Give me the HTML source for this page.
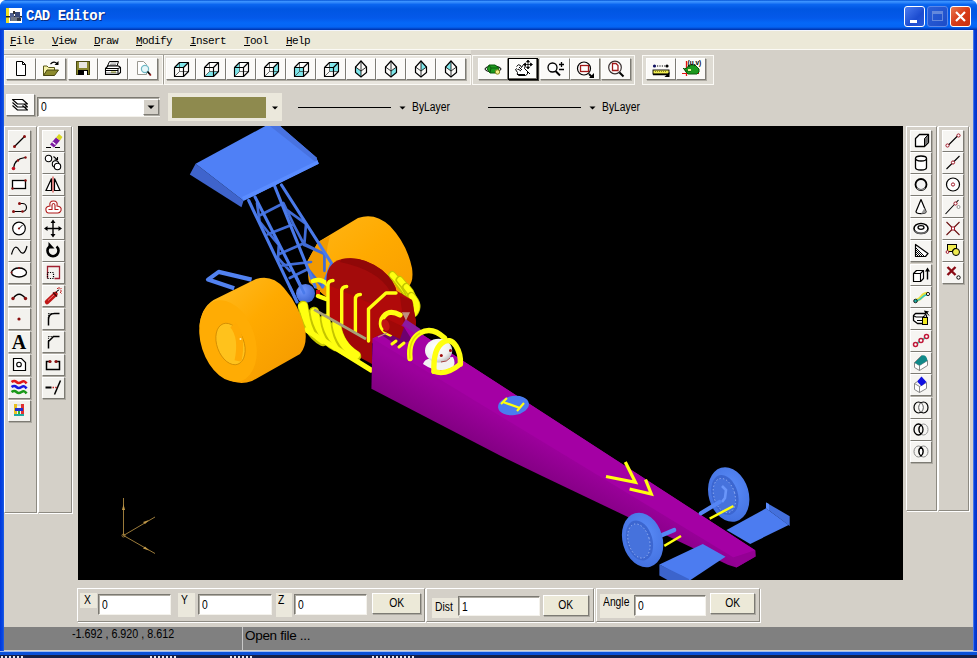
<!DOCTYPE html>
<html><head><meta charset="utf-8"><title>CAD Editor</title>
<style>
*{box-sizing:border-box;margin:0;padding:0}
html,body{width:977px;height:658px;overflow:hidden;background:#d4d0c8;font-family:"Liberation Sans",sans-serif;font-size:12px;color:#000}
#win{position:absolute;left:0;top:0;width:977px;height:658px;background:#d4d0c8;overflow:hidden}
.abs{position:absolute}
#title{left:0;top:0;width:977px;height:30px;background:linear-gradient(#0352d4 0,#3a92ff 1.5px,#2f86fa 2.5px,#0a66f0 4.5px,#0056e2 9px,#0459ea 18px,#0568f8 23px,#0564f4 27px,#0038b4 29.5px,#0038b4 30px)}
#title .t{left:26px;top:8px;color:#fff;font:bold 14px/16px "Liberation Mono",monospace;letter-spacing:-0.48px;text-shadow:1px 1px 0 #0a2a80}
#bl{left:0;top:30px;width:4px;height:628px;background:linear-gradient(90deg,#0036dc,#0a4ce2 3px,#2a62e6)}
#br{left:973px;top:30px;width:4px;height:628px;background:linear-gradient(90deg,#7ea4f0,#0a44dc 1px,#0030c8)}
#bb{left:0;top:651px;width:977px;height:4px;background:#0a50d8;border-top:1px solid #9cb8f0}
#menu{left:4px;top:30px;width:969px;height:19px;background:#ece9d8;border-top:1px solid #f4f6fc}
#menu span{position:absolute;top:4px;font:11px "Liberation Mono",monospace;letter-spacing:-0.6px}
.pr{border-color:#000 !important;box-shadow:inset -1px -1px 0 #6d6b64,inset 1px 1px 0 #fff,1px 1px 0 #403e38 !important;background:#fdfdfb !important}
.wb{width:21px;height:21px;border:1px solid #fff;border-radius:3px}
.btn{position:absolute;background:#fbfaf8;border:1px solid;border-color:#fff #7d7b74 #7d7b74 #fff;box-shadow:1px 1px 0 #aeaba3}
.tb{position:absolute;border:1px solid;border-color:#fff #9d9a92 #9d9a92 #fff}
.inp{position:absolute;background:#fff;border:1px solid;border-color:#7b7972 #f4f2ec #f4f2ec #7b7972;box-shadow:inset 1px 1px 0 #b0ada5}
.lbl{position:absolute;font-size:12px;transform:scaleX(.86);transform-origin:0 50%;white-space:nowrap}
.n{display:inline-block;transform:scaleX(.86);transform-origin:0 50%;white-space:nowrap}
.nc{display:inline-block;transform:scaleX(.86);transform-origin:50% 50%}
.ef{position:absolute;border:1px solid;border-color:#fff #8d8a82 #8d8a82 #fff;box-shadow:1px 1px 0 #fff}
#status{left:4px;top:627px;width:969px;height:23px;background:#808080}
</style></head><body><div id="win">
<div id="title" class="abs"><svg class="abs" style="left:6px;top:8px" width="16" height="15"><rect width="16" height="15" fill="#fff"/><rect width="3" height="15" fill="#f0e020"/><rect x="0" y="8" width="16" height="1.500" fill="#202020"/><rect x="4" y="5" width="4" height="8" fill="#506090"/><rect x="9" y="4" width="5" height="8" fill="#384878"/><rect x="5" y="9" width="8" height="4" fill="#707888"/><rect x="7" y="3" width="2" height="3" fill="#303030"/><rect x="11" y="10" width="4" height="3" fill="#303848"/></svg><span class="t abs">CAD Editor</span></div>
<div class="abs wb" style="left:904px;top:6px;background:linear-gradient(135deg,#4c7cf0,#1c4cd0 60%,#2a5ad8)"><div class="abs" style="left:5px;top:13px;width:7px;height:3px;background:#fff"></div></div>
<div class="abs wb" style="left:927px;top:6px;background:linear-gradient(135deg,#2c60d8,#1c4cc8);border-color:#5c88e8"><div class="abs" style="left:4px;top:4px;width:11px;height:10px;border:1px solid #6488dc;border-top-width:3px"></div></div>
<div class="abs wb" style="left:950px;top:6px;background:linear-gradient(135deg,#e87850,#d83c18 50%,#c83010)"><svg class="abs" style="left:0;top:0" width="19" height="19"><path d="M5 5l9 9M14 5l-9 9" stroke="#fff" stroke-width="2.200"/></svg></div>
<svg class="abs" id="cornerL" style="left:0;top:0" width="6" height="6"><path d="M0 0h5q-4 1-5 5z" fill="#fff"/></svg><svg class="abs" style="left:971px;top:0" width="6" height="6"><path d="M6 0h-5q4 1 5 5z" fill="#fff"/></svg>
<div id="bl" class="abs"></div><div id="br" class="abs"></div><div id="bb" class="abs"></div>
<div id="menu" class="abs">
<span style="left:6px"><u>F</u>ile</span><span style="left:48px"><u>V</u>iew</span><span style="left:90px"><u>D</u>raw</span><span style="left:132px"><u>M</u>odify</span><span style="left:186px"><u>I</u>nsert</span><span style="left:240px"><u>T</u>ool</span><span style="left:282px"><u>H</u>elp</span>
</div>
<div class="abs" style="left:4px;top:49px;width:969px;height:1px;background:#fbfaf5"></div>
<div class="abs" style="left:4px;top:50px;width:467px;height:4px;background:#e2dfd6"></div>
<div class="abs" style="left:4px;top:54px;width:467px;height:1px;background:#a9a69d"></div>
<div class="abs" style="left:4px;top:55px;width:159px;height:30px;background:#e8e5de;border:1px solid #fbfaf6"></div>
<div class="abs" style="left:164px;top:55px;width:307px;height:30px;background:#e8e5de;border:1px solid #fbfaf6"></div>
<div class="abs" style="left:472px;top:55px;width:163px;height:30px;background:#dad7cf;border:1px solid #fbfaf6"></div>
<div class="abs" style="left:642px;top:55px;width:72px;height:30px;background:#dedbd3;border:1px solid #fbfaf6"></div>
<div class="abs" style="left:163px;top:55px;width:1px;height:29px;background:#9d9a92"></div>
<div class="btn" style="left:6px;top:58px;width:30px;height:22px"><svg width="30" height="22" viewBox="0 0 30 22" style="position:absolute;left:-1px;top:-1px"><path d="M10.5 3.5h6l3 3v11h-9z" fill="#fff" stroke="#000"/><path d="M16.5 3.5v3h3" fill="none" stroke="#000"/></svg></div>
<div class="btn" style="left:36px;top:58px;width:30px;height:22px"><svg width="30" height="22" viewBox="0 0 30 22" style="position:absolute;left:-1px;top:-1px"><path d="M7.500 17.500v-9.500h3.500l1.500 1.500h6v3" fill="#f6f2a8" stroke="#5a5918"/><path d="M7.500 17.500l3.500-5.500h11.500l-4 5.500z" fill="#8c8a2c" stroke="#45440e"/><path d="M14.500 6q3.500-3.500 6.500-.5" fill="none" stroke="#000" stroke-width="1.100"/><path d="M22.500 3v4h-4z" fill="#000"/></svg></div>
<div class="btn" style="left:68px;top:58px;width:30px;height:22px"><svg width="30" height="22" viewBox="0 0 30 22" style="position:absolute;left:-1px;top:-1px"><rect x="8.500" y="3.500" width="13" height="13" fill="#8a8830" stroke="#4a4910"/><rect x="11" y="4" width="8" height="6" fill="#e8e6e0"/><rect x="10" y="12" width="10" height="5" fill="#000"/><rect x="16" y="13" width="3" height="4" fill="#fff"/></svg></div>
<div class="btn" style="left:98px;top:58px;width:30px;height:22px"><svg width="30" height="22" viewBox="0 0 30 22" style="position:absolute;left:-1px;top:-1px"><path d="M11.500 3.500h9l-1.500 4.500h-9.500z" fill="#fff" stroke="#000" stroke-width="1"/><path d="M12.500 5h6M12 6.500h6" stroke="#777" fill="none" stroke-width=".7"/><path d="M7.500 10.500l2.500-2.500h10.500l2 1.500v5l-2.500 2h-12.500z" fill="#fff" stroke="#000" stroke-width="1.100" stroke-linejoin="round"/><path d="M7.500 10.500h12.500l2.500-1M20 10.500v6" fill="none" stroke="#000" stroke-width="1"/><path d="M8 12.500h12" stroke="#000" stroke-width="1"/><rect x="13" y="13.500" width="5" height="1.200" fill="#9aa020"/><path d="M8 15h12" stroke="#555" stroke-width=".8"/></svg></div>
<div class="btn" style="left:128px;top:58px;width:30px;height:22px"><svg width="30" height="22" viewBox="0 0 30 22" style="position:absolute;left:-1px;top:-1px"><path d="M9.500 3.500h6l3 3v10h-9z" fill="#fff" stroke="#9a9890"/><circle cx="17" cy="11" r="3.600" fill="#e6f7fa" stroke="#6fb8c4" stroke-width="1.200"/><path d="M19.500 13.500l3 3.500" stroke="#000" stroke-width="1.800"/><path d="M21.500 16l1.500 1.500" stroke="#a02020" stroke-width="1.500"/></svg></div>
<div class="btn" style="left:166px;top:58px;width:30px;height:22px"><svg width="30" height="22" viewBox="0 0 30 22" style="position:absolute;left:-1px;top:-1px"><polygon points="8.5,9.5 17.5,9.5 22.5,4.5 13.5,4.5" fill="#7fe6ea"/><path d="M13.5,13.5L13.5,4.5M13.5,13.5L22.5,13.5M13.5,13.5L8.5,18.5" stroke="#333" stroke-width=".7" fill="none"/><path d="M8.5,9.5L17.5,9.5L17.5,18.5L8.5,18.5ZM8.5,9.5L13.5,4.5L22.5,4.5L17.5,9.5M22.5,4.5L22.5,13.5L17.5,18.5" stroke="#000" stroke-width="1.150" fill="none" stroke-linejoin="round"/></svg></div>
<div class="btn" style="left:196px;top:58px;width:30px;height:22px"><svg width="30" height="22" viewBox="0 0 30 22" style="position:absolute;left:-1px;top:-1px"><polygon points="8.5,18.5 17.5,18.5 22.5,13.5 13.5,13.5" fill="#7fe6ea"/><path d="M13.5,13.5L13.5,4.5M13.5,13.5L22.5,13.5M13.5,13.5L8.5,18.5" stroke="#333" stroke-width=".7" fill="none"/><path d="M8.5,9.5L17.5,9.5L17.5,18.5L8.5,18.5ZM8.5,9.5L13.5,4.5L22.5,4.5L17.5,9.5M22.5,4.5L22.5,13.5L17.5,18.5" stroke="#000" stroke-width="1.150" fill="none" stroke-linejoin="round"/></svg></div>
<div class="btn" style="left:226px;top:58px;width:30px;height:22px"><svg width="30" height="22" viewBox="0 0 30 22" style="position:absolute;left:-1px;top:-1px"><polygon points="8.5,9.5 8.5,18.5 13.5,13.5 13.5,4.5" fill="#7fe6ea"/><path d="M13.5,13.5L13.5,4.5M13.5,13.5L22.5,13.5M13.5,13.5L8.5,18.5" stroke="#333" stroke-width=".7" fill="none"/><path d="M8.5,9.5L17.5,9.5L17.5,18.5L8.5,18.5ZM8.5,9.5L13.5,4.5L22.5,4.5L17.5,9.5M22.5,4.5L22.5,13.5L17.5,18.5" stroke="#000" stroke-width="1.150" fill="none" stroke-linejoin="round"/></svg></div>
<div class="btn" style="left:256px;top:58px;width:30px;height:22px"><svg width="30" height="22" viewBox="0 0 30 22" style="position:absolute;left:-1px;top:-1px"><polygon points="17.5,9.5 17.5,18.5 22.5,13.5 22.5,4.5" fill="#7fe6ea"/><path d="M13.5,13.5L13.5,4.5M13.5,13.5L22.5,13.5M13.5,13.5L8.5,18.5" stroke="#333" stroke-width=".7" fill="none"/><path d="M8.5,9.5L17.5,9.5L17.5,18.5L8.5,18.5ZM8.5,9.5L13.5,4.5L22.5,4.5L17.5,9.5M22.5,4.5L22.5,13.5L17.5,18.5" stroke="#000" stroke-width="1.150" fill="none" stroke-linejoin="round"/></svg></div>
<div class="btn" style="left:286px;top:58px;width:30px;height:22px"><svg width="30" height="22" viewBox="0 0 30 22" style="position:absolute;left:-1px;top:-1px"><polygon points="8.5,9.5 17.5,9.5 17.5,18.5 8.5,18.5" fill="#7fe6ea"/><path d="M13.5,13.5L13.5,4.5M13.5,13.5L22.5,13.5M13.5,13.5L8.5,18.5" stroke="#333" stroke-width=".7" fill="none"/><path d="M8.5,9.5L17.5,9.5L17.5,18.5L8.5,18.5ZM8.5,9.5L13.5,4.5L22.5,4.5L17.5,9.5M22.5,4.5L22.5,13.5L17.5,18.5" stroke="#000" stroke-width="1.150" fill="none" stroke-linejoin="round"/></svg></div>
<div class="btn" style="left:316px;top:58px;width:30px;height:22px"><svg width="30" height="22" viewBox="0 0 30 22" style="position:absolute;left:-1px;top:-1px"><polygon points="13.5,4.5 22.5,4.5 22.5,13.5 13.5,13.5" fill="#7fe6ea"/><path d="M13.5,13.5L13.5,4.5M13.5,13.5L22.5,13.5M13.5,13.5L8.5,18.5" stroke="#333" stroke-width=".7" fill="none"/><path d="M8.5,9.5L17.5,9.5L17.5,18.5L8.5,18.5ZM8.5,9.5L13.5,4.5L22.5,4.5L17.5,9.5M22.5,4.5L22.5,13.5L17.5,18.5" stroke="#000" stroke-width="1.150" fill="none" stroke-linejoin="round"/></svg></div>
<div class="btn" style="left:346px;top:58px;width:30px;height:22px"><svg width="30" height="22" viewBox="0 0 30 22" style="position:absolute;left:-1px;top:-1px"><polygon points="9.5,9 15,13 15,19 9.5,14.5" fill="#7fe6ea"/><path d="M15,3L20.5,9L20.5,14.5L15,19L9.5,14.5L9.5,9Z" fill="none" stroke="#000" stroke-width="1.200"/><path d="M9.5,9L15,13L20.5,9M15,13L15,19M15,3L15,13" fill="none" stroke="#000" stroke-width=".8"/></svg></div>
<div class="btn" style="left:376px;top:58px;width:30px;height:22px"><svg width="30" height="22" viewBox="0 0 30 22" style="position:absolute;left:-1px;top:-1px"><polygon points="20.5,9 15,13 15,19 20.5,14.5" fill="#7fe6ea"/><path d="M15,3L20.5,9L20.5,14.5L15,19L9.5,14.5L9.5,9Z" fill="none" stroke="#000" stroke-width="1.200"/><path d="M9.5,9L15,13L20.5,9M15,13L15,19M15,3L15,13" fill="none" stroke="#000" stroke-width=".8"/></svg></div>
<div class="btn" style="left:406px;top:58px;width:30px;height:22px"><svg width="30" height="22" viewBox="0 0 30 22" style="position:absolute;left:-1px;top:-1px"><polygon points="15,3 20.5,9 15,13 15,9" fill="#7fe6ea"/><path d="M15,3L20.5,9L20.5,14.5L15,19L9.5,14.5L9.5,9Z" fill="none" stroke="#000" stroke-width="1.200"/><path d="M9.5,9L15,13L20.5,9M15,13L15,19M15,3L15,13" fill="none" stroke="#000" stroke-width=".8"/></svg></div>
<div class="btn" style="left:436px;top:58px;width:30px;height:22px"><svg width="30" height="22" viewBox="0 0 30 22" style="position:absolute;left:-1px;top:-1px"><polygon points="15,3 9.5,9 15,13 15,9" fill="#7fe6ea"/><path d="M15,3L20.5,9L20.5,14.5L15,19L9.5,14.5L9.5,9Z" fill="none" stroke="#000" stroke-width="1.200"/><path d="M9.5,9L15,13L20.5,9M15,13L15,19M15,3L15,13" fill="none" stroke="#000" stroke-width=".8"/></svg></div>
<div class="btn" style="left:478px;top:58px;width:30px;height:22px"><svg width="30" height="22" viewBox="0 0 30 22" style="position:absolute;left:-1px;top:-1px"><ellipse cx="15" cy="11" rx="8" ry="3" fill="none" stroke="#000" stroke-width="1"/><path d="M9 11l2-4h6l4 3-1 5h-8z" fill="#1e9a1e" stroke="#0a5a0a"/><path d="M11 7l2 3h7M13 10l-1 5" stroke="#0a5a0a" fill="none"/><circle cx="19.500" cy="14" r="2.200" fill="#f4f08a" stroke="#8a8820"/></svg></div>
<div class="btn pr" style="left:508px;top:58px;width:30px;height:22px"><svg width="30" height="22" viewBox="0 0 30 22" style="position:absolute;left:-1px;top:-1px"><path d="M8.500 8.500q2-3 4-1l1 2 2-3q1.500-1 2 .5l-1 3.500 3 3q1 3-2 4h-7q-2-1-1-3l-2-3q1-1.500 2 0" fill="#fff" stroke="#000" stroke-width="1"/><path d="M10 11l3 2M11 9l3 3M9 16.500h8" stroke="#000" fill="none"/><path d="M20 3v7M16.500 6.500h7M20 2l1.500 2h-3zM20 11l1.500-2h-3zM15.500 6.500l2-1.500v3zM24.500 6.500l-2-1.500v3z" stroke="#000" fill="#000" stroke-width=".8"/><path d="M18 12l4 4" stroke="#000"/></svg></div>
<div class="btn" style="left:540px;top:58px;width:30px;height:22px"><svg width="30" height="22" viewBox="0 0 30 22" style="position:absolute;left:-1px;top:-1px"><circle cx="12.500" cy="9.500" r="4.500" fill="#fff" stroke="#000" stroke-width="1.300"/><path d="M15.500 13l4.500 4.500" stroke="#000" stroke-width="2"/><path d="M19 6.500h5M21.500 4v5M19 11.500h5" stroke="#000" stroke-width="1.300"/></svg></div>
<div class="btn" style="left:570px;top:58px;width:30px;height:22px"><svg width="30" height="22" viewBox="0 0 30 22" style="position:absolute;left:-1px;top:-1px"><circle cx="14" cy="10.500" r="6.500" fill="#fff" stroke="#000" stroke-width="1.200"/><rect x="10.500" y="7.500" width="8" height="6" fill="none" stroke="#a01818" stroke-width="1.300"/><path d="M19 16l3 3" stroke="#000" stroke-width="1.800"/><path d="M24 15v5h-5z" fill="#000"/></svg></div>
<div class="btn" style="left:601px;top:58px;width:30px;height:22px"><svg width="30" height="22" viewBox="0 0 30 22" style="position:absolute;left:-1px;top:-1px"><circle cx="14" cy="9.500" r="6.300" fill="#fff" stroke="#3a3030" stroke-width="1.200"/><path d="M11.500 5.500h3.500l2 2v5h-5.500z" fill="#fff" stroke="#a01818" stroke-width="1.300"/><path d="M18.500 14.500l4 4" stroke="#000" stroke-width="2"/></svg></div>
<div class="btn" style="left:646px;top:58px;width:30px;height:22px"><svg width="30" height="22" viewBox="0 0 30 22" style="position:absolute;left:-1px;top:-1px"><circle cx="8.500" cy="8" r="1.600" fill="#101060"/><circle cx="21" cy="8" r="1.600" fill="#000"/><path d="M11 8h8" stroke="#000" stroke-width="1.200" stroke-dasharray="1.200 1.200"/><rect x="7" y="12" width="16" height="4" fill="#f2ee50" stroke="#000" stroke-width=".9"/><path d="M7 16.500h16" stroke="#000" stroke-width="1.500"/><path d="M9 13.500h12" stroke="#8a8820" stroke-dasharray="1 1"/><path d="M23.500 14v5h-5z" fill="#000"/></svg></div>
<div class="btn" style="left:676px;top:58px;width:30px;height:22px"><svg width="30" height="22" viewBox="0 0 30 22" style="position:absolute;left:-1px;top:-1px"><path d="M10.500 3v15" stroke="#e01010" stroke-width="1.300"/><path d="M6 15.500h17" stroke="#e01010" stroke-width="1"/><path d="M8 11l3-1 2-3h6l3 3 1 1v3l-2 2h-9l-2-2z" fill="#1e9a1e" stroke="#0a5a0a"/><path d="M7 10l3 3h5" stroke="#0a5a0a" fill="none"/><rect x="12" y="11" width="3" height="2" fill="#e8f0a0"/><text x="11.500" y="7" font-size="6.500" font-family="Liberation Sans,sans-serif" font-weight="bold" fill="#000">(u,v)</text></svg></div>
<div class="btn" style="left:6px;top:94px;width:29px;height:22px"><svg width="30" height="22" viewBox="0 0 30 22" style="position:absolute;left:-1px;top:-1px"><path d="M6.500 11.500l5 4.500h10l-5-4.500M6.500 8.500l5 4.500h10l-5-4.500" fill="#fff" stroke="#000" stroke-width="1.100" stroke-linejoin="round"/><path d="M6.500 5.500h10l5 4.500h-10z" fill="#fff" stroke="#000" stroke-width="1.100" stroke-linejoin="round"/></svg></div>
<div class="inp" style="left:37px;top:97px;width:123px;height:20px"><span class="abs n" style="left:3px;top:2px;font-size:12px">0</span><div class="btn" style="left:105px;top:1px;width:16px;height:16px;background:#d4d0c8"><svg width="16" height="16" style="position:absolute;left:-1px;top:-1px"><path d="M4.500 6.500h7l-3.500 3.500z" fill="#000"/></svg></div></div>
<div class="abs" style="left:168px;top:93px;width:114px;height:28px;background:#ebe8dc"></div>
<div class="abs" style="left:172px;top:97px;width:94px;height:21px;background:#8e8a4e"></div>
<svg class="abs" style="left:270px;top:103px" width="10" height="10"><path d="M2 3.500h6l-3 3z" fill="#000"/></svg>
<div class="abs" style="left:298px;top:107px;width:93px;height:1px;background:#000"></div>
<svg class="abs" style="left:398px;top:103px" width="10" height="10"><path d="M1.500 3.500h6l-3 3z" fill="#000"/></svg>
<span class="lbl" style="left:412px;top:100px;font-size:12px">ByLayer</span>
<div class="abs" style="left:488px;top:107px;width:93px;height:1px;background:#000"></div>
<svg class="abs" style="left:588px;top:103px" width="10" height="10"><path d="M1.500 3.500h6l-3 3z" fill="#000"/></svg>
<span class="lbl" style="left:602px;top:100px;font-size:12px">ByLayer</span>
<div class="ef" style="left:4px;top:126px;width:33px;height:387px"></div>
<div class="ef" style="left:38px;top:126px;width:34px;height:387px"></div>
<div class="ef" style="left:906px;top:126px;width:31px;height:385px"></div>
<div class="ef" style="left:938px;top:126px;width:31px;height:385px"></div>
<div class="btn" style="left:8px;top:130px;width:23px;height:22px;background:#f3f2ee"><svg width="22" height="21" viewBox="0 0 22 21" style="position:absolute;left:-1px;top:-1px"><path d="M6.500 16.500L16.500 6.500" stroke="#000" stroke-width="1.200"/><circle cx="6.5" cy="16.5" r="1.5" fill="#8a1010"/><circle cx="16.5" cy="6.5" r="1.5" fill="#8a1010"/></svg></div>
<div class="btn" style="left:8px;top:152px;width:23px;height:22px;background:#f3f2ee"><svg width="22" height="21" viewBox="0 0 22 21" style="position:absolute;left:-1px;top:-1px"><path d="M5.500 16.500Q6 7 17 5.500" stroke="#000" stroke-width="1.200" fill="none"/><circle cx="5.5" cy="16.5" r="1.8" fill="#c01020"/><circle cx="10" cy="8.5" r="1.2" fill="#8a1010"/><circle cx="17.5" cy="5.5" r="1.2" fill="#8a1010"/></svg></div>
<div class="btn" style="left:8px;top:174px;width:23px;height:22px;background:#f3f2ee"><svg width="22" height="21" viewBox="0 0 22 21" style="position:absolute;left:-1px;top:-1px"><rect x="4.500" y="6.500" width="13" height="8" fill="#fff" stroke="#000" stroke-width="1.300"/><circle cx="4.5" cy="14.5" r="1.2" fill="#8a1010"/><circle cx="17.5" cy="6.5" r="1.2" fill="#8a1010"/></svg></div>
<div class="btn" style="left:8px;top:196px;width:23px;height:22px;background:#f3f2ee"><svg width="22" height="21" viewBox="0 0 22 21" style="position:absolute;left:-1px;top:-1px"><path d="M5.500 15.500h9a4 4 0 0 0 0-8h-3" stroke="#000" stroke-width="1.200" fill="none"/><circle cx="5.5" cy="15.5" r="1.5" fill="#8a1010"/><circle cx="14.5" cy="15.5" r="1.3" fill="#8a1010"/><circle cx="11.5" cy="7.5" r="1.5" fill="#8a1010"/></svg></div>
<div class="btn" style="left:8px;top:218px;width:23px;height:22px;background:#f3f2ee"><svg width="22" height="21" viewBox="0 0 22 21" style="position:absolute;left:-1px;top:-1px"><circle cx="11" cy="10.500" r="6.300" fill="#fff" stroke="#000" stroke-width="1.200"/><path d="M11 10.500l3.500-3.500" stroke="#000" stroke-width="1"/><circle cx="11" cy="10.5" r="1.1" fill="#8a1010"/></svg></div>
<div class="btn" style="left:8px;top:240px;width:23px;height:22px;background:#f3f2ee"><svg width="22" height="21" viewBox="0 0 22 21" style="position:absolute;left:-1px;top:-1px"><path d="M3.500 14.500C6 5 9 6 11.500 10.500S17 14 19 6" stroke="#000" stroke-width="1.200" fill="none"/></svg></div>
<div class="btn" style="left:8px;top:262px;width:23px;height:22px;background:#f3f2ee"><svg width="22" height="21" viewBox="0 0 22 21" style="position:absolute;left:-1px;top:-1px"><ellipse cx="11" cy="10.500" rx="7.500" ry="4.500" fill="#fff" stroke="#000" stroke-width="1.300"/><circle cx="3.5" cy="10.5" r="1" fill="#8a1010"/><circle cx="11" cy="6" r="1" fill="#8a1010"/></svg></div>
<div class="btn" style="left:8px;top:285px;width:23px;height:22px;background:#f3f2ee"><svg width="22" height="21" viewBox="0 0 22 21" style="position:absolute;left:-1px;top:-1px"><path d="M5 13.500Q11 5 17.500 13.500" stroke="#000" stroke-width="1.300" fill="none"/><circle cx="5" cy="13.5" r="1.7" fill="#8a1010"/><circle cx="17.5" cy="13.5" r="1.7" fill="#8a1010"/></svg></div>
<div class="btn" style="left:8px;top:308px;width:23px;height:22px;background:#f3f2ee"><svg width="22" height="21" viewBox="0 0 22 21" style="position:absolute;left:-1px;top:-1px"><circle cx="11" cy="11" r="1.6" fill="#8a1010"/></svg></div>
<div class="btn" style="left:8px;top:331px;width:23px;height:22px;background:#f3f2ee"><svg width="22" height="21" viewBox="0 0 22 21" style="position:absolute;left:-1px;top:-1px"><text x="11" y="17.500" text-anchor="middle" font-family="Liberation Serif,serif" font-weight="bold" font-size="20" fill="#000">A</text></svg></div>
<div class="btn" style="left:8px;top:354px;width:23px;height:22px;background:#f3f2ee"><svg width="22" height="21" viewBox="0 0 22 21" style="position:absolute;left:-1px;top:-1px"><path d="M5.500 4.500h8l4 4v8h-12z" fill="#fff" stroke="#000" stroke-width="1.200"/><circle cx="11" cy="10.500" r="2.300" fill="none" stroke="#000" stroke-width="1.100"/></svg></div>
<div class="btn" style="left:8px;top:377px;width:23px;height:22px;background:#f3f2ee"><svg width="22" height="21" viewBox="0 0 22 21" style="position:absolute;left:-1px;top:-1px"><path d="M3.500 5q3-2 5 0t5 0 5 1.500" stroke="#e01818" stroke-width="2.600" fill="none"/><path d="M3.500 10q3-2 5 0t5 0 5 1.500" stroke="#1818e0" stroke-width="2.600" fill="none"/><path d="M3.500 15q3-2 5 0t5 0 5 1.500" stroke="#189818" stroke-width="2.600" fill="none"/></svg></div>
<div class="btn" style="left:8px;top:400px;width:23px;height:22px;background:#f3f2ee"><svg width="22" height="21" viewBox="0 0 22 21" style="position:absolute;left:-1px;top:-1px"><rect x="6" y="4" width="3" height="11" fill="#e8c020"/><rect x="13" y="4" width="3" height="11" fill="#e03030"/><rect x="7" y="8" width="8" height="3" fill="#2030d0"/><rect x="6" y="14" width="10" height="2" fill="#20a8a0"/><rect x="9" y="4" width="4" height="2" fill="#d8d8d8"/><rect x="10" y="11" width="2" height="3" fill="#30b030"/></svg></div>
<div class="btn" style="left:42px;top:130px;width:23px;height:22px;background:#f3f2ee"><svg width="22" height="21" viewBox="0 0 22 21" style="position:absolute;left:-1px;top:-1px"><path d="M4 17.500h5M13 17.500h5" stroke="#000" stroke-width="1.200"/><path d="M8 14.500l6-7 4 3-6 7z" fill="#7a18a0"/><path d="M14 7.500l3-3.500 3.500 3-2.500 3.500z" fill="#d8d820"/><path d="M10.500 12l3 2.500" stroke="#fff" stroke-width="1.200"/></svg></div>
<div class="btn" style="left:42px;top:152px;width:23px;height:22px;background:#f3f2ee"><svg width="22" height="21" viewBox="0 0 22 21" style="position:absolute;left:-1px;top:-1px"><circle cx="6.500" cy="6.500" r="3.200" fill="#fff" stroke="#000" stroke-width="1.100"/><circle cx="13.500" cy="12" r="3.200" fill="#fff" stroke="#000" stroke-width="1.100"/><circle cx="15.500" cy="14.500" r="3.200" fill="#fff" stroke="#000" stroke-width="1.100"/><path d="M11.500 4.500l4 3.500M15.500 8v-3M15.500 8h-3" stroke="#000" stroke-width="1.100" fill="none"/></svg></div>
<div class="btn" style="left:42px;top:174px;width:23px;height:22px;background:#f3f2ee"><svg width="22" height="21" viewBox="0 0 22 21" style="position:absolute;left:-1px;top:-1px"><path d="M9.500 4.500v12h-5.500zM12.500 4.500v12h5.500z" fill="#fff" stroke="#000" stroke-width="1.200"/><path d="M11 2.500v16" stroke="#d02020" stroke-width="1"/></svg></div>
<div class="btn" style="left:42px;top:196px;width:23px;height:22px;background:#f3f2ee"><svg width="22" height="21" viewBox="0 0 22 21" style="position:absolute;left:-1px;top:-1px"><path d="M4 14.500q-1-4 4-4.500q-1-5 3.500-5t3.500 5q5 .5 4 4.500q-1 2.500-3 2.500h-9.500q-2 0-2.500-2.500z" fill="#fff" stroke="#b01818" stroke-width="1.100"/><path d="M6.500 13.500h3.500v-4q0-2 1.500-2t1.500 2v4h3.500" fill="none" stroke="#b01818" stroke-width="1.100"/></svg></div>
<div class="btn" style="left:42px;top:218px;width:23px;height:22px;background:#f3f2ee"><svg width="22" height="21" viewBox="0 0 22 21" style="position:absolute;left:-1px;top:-1px"><path d="M11 3.500v14M4 10.500h14" stroke="#000" stroke-width="1.400"/><path d="M11 1.500l2.500 3.500h-5zM11 19.500l2.500-3.500h-5zM2 10.500l3.500-2.500v5zM20 10.500l-3.500-2.500v5z" fill="#000"/></svg></div>
<div class="btn" style="left:42px;top:240px;width:23px;height:22px;background:#f3f2ee"><svg width="22" height="21" viewBox="0 0 22 21" style="position:absolute;left:-1px;top:-1px"><path d="M14.500 6.500A5.500 5.500 0 1 1 7.500 6.500" stroke="#000" stroke-width="2.600" fill="none"/><path d="M6.500 2v6.500h6z" fill="#000"/></svg></div>
<div class="btn" style="left:42px;top:262px;width:23px;height:22px;background:#f3f2ee"><svg width="22" height="21" viewBox="0 0 22 21" style="position:absolute;left:-1px;top:-1px"><path d="M5.500 16.500v-12h12v12h-5" fill="none" stroke="#a02030" stroke-width="1.300"/><rect x="5.500" y="10.500" width="6" height="6" fill="none" stroke="#000" stroke-width="1.200" stroke-dasharray="1.200 1.200"/></svg></div>
<div class="btn" style="left:42px;top:285px;width:23px;height:22px;background:#f3f2ee"><svg width="22" height="21" viewBox="0 0 22 21" style="position:absolute;left:-1px;top:-1px"><path d="M5 17l8.500-8" stroke="#c01818" stroke-width="4.500" stroke-linecap="round"/><path d="M6 15.500l7-6.500" stroke="#f08080" stroke-width="1"/><path d="M11 7.500l4 4" stroke="#400808" stroke-width="1.500"/><path d="M14 8q1-3 3-3" stroke="#000" stroke-width="1" fill="none"/><path d="M17 2v2M19.500 3l-1.500 1.500M20 6h-2M19.500 8.500l-1.500-1.500M15 3l1 1" stroke="#c02020" stroke-width="1"/></svg></div>
<div class="btn" style="left:42px;top:308px;width:23px;height:22px;background:#f3f2ee"><svg width="22" height="21" viewBox="0 0 22 21" style="position:absolute;left:-1px;top:-1px"><path d="M6.500 17.500v-6q0-6 6-6h5" fill="none" stroke="#000" stroke-width="1.500"/><path d="M6.500 10v-4.500h5" fill="none" stroke="#000" stroke-width="1.100" stroke-dasharray="1.100 1.100"/></svg></div>
<div class="btn" style="left:42px;top:331px;width:23px;height:22px;background:#f3f2ee"><svg width="22" height="21" viewBox="0 0 22 21" style="position:absolute;left:-1px;top:-1px"><path d="M6.500 17.500v-7l5-5h6" fill="none" stroke="#000" stroke-width="1.500"/><path d="M6.500 10v-4.500h5" fill="none" stroke="#000" stroke-width="1.100" stroke-dasharray="1.100 1.100"/></svg></div>
<div class="btn" style="left:42px;top:354px;width:23px;height:22px;background:#f3f2ee"><svg width="22" height="21" viewBox="0 0 22 21" style="position:absolute;left:-1px;top:-1px"><path d="M8 7.500h-3.500v8h13v-8h-3.500" fill="none" stroke="#000" stroke-width="1.500"/><circle cx="8" cy="7.5" r="1.6" fill="#8a1010"/><circle cx="14" cy="7.5" r="1.6" fill="#8a1010"/></svg></div>
<div class="btn" style="left:42px;top:377px;width:23px;height:22px;background:#f3f2ee"><svg width="22" height="21" viewBox="0 0 22 21" style="position:absolute;left:-1px;top:-1px"><path d="M3.500 10.500h6" stroke="#000" stroke-width="2"/><path d="M10.500 10.500h5" stroke="#c02020" stroke-width="1.500" stroke-dasharray="1.500 1.200"/><path d="M18.500 3.500l-6 14" stroke="#000" stroke-width="1.500"/></svg></div>
<div class="btn" style="left:910px;top:130px;width:22px;height:22px;background:#f6f5f2"><svg width="22" height="21" viewBox="0 0 22 21" style="position:absolute;left:-1px;top:-1px"><path d="M5.500 8.500l4-4h9v8l-4 4h-9z" fill="#fff" stroke="#000" stroke-width="1.300" stroke-linejoin="round"/><path d="M14.500 8.500l4-4v8l-4 4z" fill="#707070"/><path d="M14.500 8.500l4-4v8l-4 4z" fill="none" stroke="#000" stroke-width="1"/></svg></div>
<div class="btn" style="left:910px;top:152px;width:22px;height:22px;background:#f6f5f2"><svg width="22" height="21" viewBox="0 0 22 21" style="position:absolute;left:-1px;top:-1px"><path d="M5.500 6.500v9a5.500 2.500 0 0 0 11 0v-9" fill="#fff" stroke="#000" stroke-width="1.300"/><ellipse cx="11" cy="6.500" rx="5.500" ry="2.500" fill="#fff" stroke="#000" stroke-width="1.300"/></svg></div>
<div class="btn" style="left:910px;top:174px;width:22px;height:22px;background:#f6f5f2"><svg width="22" height="21" viewBox="0 0 22 21" style="position:absolute;left:-1px;top:-1px"><circle cx="11" cy="10.500" r="5.500" fill="#f4f4f4" stroke="#000" stroke-width="1.800"/><path d="M7 14a5.500 5.500 0 0 0 8 0" stroke="#888" stroke-width="1.200" fill="none"/></svg></div>
<div class="btn" style="left:910px;top:196px;width:22px;height:22px;background:#f6f5f2"><svg width="22" height="21" viewBox="0 0 22 21" style="position:absolute;left:-1px;top:-1px"><path d="M11 3.500l-5 12a5 2.200 0 0 0 10 0z" fill="#fff" stroke="#000" stroke-width="1.200" stroke-linejoin="round"/><path d="M11 17.700a5 2.200 0 0 0 5-2.200l-1.500-3.500z" fill="#999"/></svg></div>
<div class="btn" style="left:910px;top:218px;width:22px;height:22px;background:#f6f5f2"><svg width="22" height="21" viewBox="0 0 22 21" style="position:absolute;left:-1px;top:-1px"><ellipse cx="11" cy="10.500" rx="7" ry="5" fill="#fff" stroke="#000" stroke-width="1.600"/><ellipse cx="11" cy="9.500" rx="3" ry="1.800" fill="#fff" stroke="#000" stroke-width="1.300"/><path d="M4.500 12.500a7 4.500 0 0 0 13 0" stroke="#666" stroke-width="1.500" fill="none"/></svg></div>
<div class="btn" style="left:910px;top:240px;width:22px;height:22px;background:#f6f5f2"><svg width="22" height="21" viewBox="0 0 22 21" style="position:absolute;left:-1px;top:-1px"><defs><pattern id="ht" width="2" height="2" patternUnits="userSpaceOnUse"><rect width="1" height="1" fill="#000"/><rect x="1" y="1" width="1" height="1" fill="#000"/></pattern></defs><path d="M5.500 4.500v12h10l2.500-3z" fill="#fff" stroke="#000" stroke-width="1.200" stroke-linejoin="round"/><path d="M5.500 6v10.500h10z" fill="url(#ht)"/></svg></div>
<div class="btn" style="left:910px;top:264px;width:22px;height:22px;background:#f6f5f2"><svg width="22" height="21" viewBox="0 0 22 21" style="position:absolute;left:-1px;top:-1px"><path d="M3.500 9.500l3-3h7v8l-3 3h-7z" fill="#fff" stroke="#000" stroke-width="1.200" stroke-linejoin="round"/><path d="M3.500 9.500h7l3-3M10.500 9.500v8" fill="none" stroke="#000" stroke-width="1.100"/><path d="M17.500 15.500v-9" stroke="#000" stroke-width="1.400"/><path d="M17.500 3.500l2.500 4h-5z" fill="#000"/></svg></div>
<div class="btn" style="left:910px;top:286px;width:22px;height:22px;background:#f6f5f2"><svg width="22" height="21" viewBox="0 0 22 21" style="position:absolute;left:-1px;top:-1px"><path d="M6 14.500q4-1 6-4t6-3" stroke="#e8e040" stroke-width="3.500" fill="none"/><path d="M6 15q4-1 6-3.500t6-3" stroke="#30c8c0" stroke-width="1.500" fill="none"/><circle cx="5.500" cy="15" r="1.800" fill="#20b0a8" stroke="#000" stroke-width=".8"/><circle cx="18" cy="8" r="1.600" fill="#fff" stroke="#000" stroke-width=".9"/></svg></div>
<div class="btn" style="left:910px;top:308px;width:22px;height:22px;background:#f6f5f2"><svg width="22" height="21" viewBox="0 0 22 21" style="position:absolute;left:-1px;top:-1px"><path d="M3.500 7.500l2-2h9l2 2v3l-2 5h-7l-4-3z" fill="#fff" stroke="#000" stroke-width="1.300" stroke-linejoin="round"/><path d="M6 9h7l2-1.500M6 9l-2 -1M7 12.500h6" fill="none" stroke="#000" stroke-width="1.100"/><rect x="12.500" y="9.500" width="5" height="7" fill="#f0e820" stroke="#000" stroke-width="1"/><path d="M14 2.500l5 1-3.500 3z" fill="#000"/><path d="M17 5l2 2.500" stroke="#000" stroke-width="1"/></svg></div>
<div class="btn" style="left:910px;top:330px;width:22px;height:22px;background:#f6f5f2"><svg width="22" height="21" viewBox="0 0 22 21" style="position:absolute;left:-1px;top:-1px"><path d="M4 15.500l13-9" stroke="#30d0b8" stroke-width="2"/><circle cx="5.500" cy="14.500" r="2" fill="#fff" stroke="#c01838" stroke-width="1.500"/><circle cx="11" cy="10.500" r="2" fill="#fff" stroke="#c01838" stroke-width="1.500"/><circle cx="16.500" cy="6.500" r="2" fill="#fff" stroke="#c01838" stroke-width="1.500"/></svg></div>
<div class="btn" style="left:910px;top:352px;width:22px;height:22px;background:#f6f5f2"><svg width="22" height="21" viewBox="0 0 22 21" style="position:absolute;left:-1px;top:-1px"><path d="M4.500 10.500l5 3v5l-5-3z M9.500 13.500l8-5v5l-8 5z" fill="#fff" stroke="#888" stroke-width="1"/><path d="M4.500 10.500l7-7q5-1 6 5l-8 5z" fill="#108888"/><path d="M4.500 10.500l7-7" stroke="#888" stroke-width="1"/></svg></div>
<div class="btn" style="left:910px;top:374px;width:22px;height:22px;background:#f6f5f2"><svg width="22" height="21" viewBox="0 0 22 21" style="position:absolute;left:-1px;top:-1px"><path d="M4.500 9.500l5 3v6l-5-3z M9.500 12.500l7-4v6l-7 4z" fill="#fff" stroke="#888" stroke-width="1"/><path d="M11.500 2.500l5 5.500-5 4-4.500-4.500z" fill="#1010e0"/><path d="M4.500 9.500l3-2" stroke="#888" stroke-width="1"/></svg></div>
<div class="btn" style="left:910px;top:397px;width:22px;height:22px;background:#f6f5f2"><svg width="22" height="21" viewBox="0 0 22 21" style="position:absolute;left:-1px;top:-1px"><ellipse cx="8.500" cy="10.500" rx="4.500" ry="5.500" fill="none" stroke="#000" stroke-width="1.200"/><ellipse cx="13.500" cy="10.500" rx="4.500" ry="5.500" fill="none" stroke="#000" stroke-width="1.200"/><path d="M11 6a5 5.500 0 0 1 0 9a5 5.500 0 0 1 0-9z" fill="#fff" stroke="#999" stroke-width=".8"/></svg></div>
<div class="btn" style="left:910px;top:419px;width:22px;height:22px;background:#f6f5f2"><svg width="22" height="21" viewBox="0 0 22 21" style="position:absolute;left:-1px;top:-1px"><ellipse cx="13.500" cy="10.500" rx="4.500" ry="5.500" fill="none" stroke="#999" stroke-width="1"/><ellipse cx="8.500" cy="10.500" rx="4.500" ry="5.500" fill="none" stroke="#000" stroke-width="1.300"/><path d="M11 6a5 5.500 0 0 0 0 9" fill="none" stroke="#000" stroke-width="1.300"/></svg></div>
<div class="btn" style="left:910px;top:441px;width:22px;height:22px;background:#f6f5f2"><svg width="22" height="21" viewBox="0 0 22 21" style="position:absolute;left:-1px;top:-1px"><ellipse cx="8.500" cy="10.500" rx="4.500" ry="5.500" fill="none" stroke="#888" stroke-width="1"/><ellipse cx="13.500" cy="10.500" rx="4.500" ry="5.500" fill="none" stroke="#888" stroke-width="1"/><path d="M11 6a5 5.500 0 0 1 0 9a5 5.500 0 0 1 0-9z" fill="#fff" stroke="#000" stroke-width="1.400"/></svg></div>
<div class="btn" style="left:942px;top:130px;width:22px;height:22px;background:#f6f5f2"><svg width="22" height="21" viewBox="0 0 22 21" style="position:absolute;left:-1px;top:-1px"><path d="M6 15.500l10-10" stroke="#000" stroke-width="1.100"/><circle cx="5.5" cy="15.5" r="1.6" fill="#fff" stroke="#a01828" stroke-width="1"/><circle cx="16.5" cy="5.5" r="1.6" fill="#fff" stroke="#a01828" stroke-width="1"/></svg></div>
<div class="btn" style="left:942px;top:152px;width:22px;height:22px;background:#f6f5f2"><svg width="22" height="21" viewBox="0 0 22 21" style="position:absolute;left:-1px;top:-1px"><path d="M4.500 17l13-13" stroke="#000" stroke-width="1.100"/><circle cx="11" cy="10.5" r="1.6" fill="#fff" stroke="#a01828" stroke-width="1"/></svg></div>
<div class="btn" style="left:942px;top:174px;width:22px;height:22px;background:#f6f5f2"><svg width="22" height="21" viewBox="0 0 22 21" style="position:absolute;left:-1px;top:-1px"><circle cx="11" cy="10.500" r="6.500" fill="#fff" stroke="#000" stroke-width="1.200"/><circle cx="11" cy="10.5" r="1.6" fill="#fff" stroke="#a01828" stroke-width="1"/></svg></div>
<div class="btn" style="left:942px;top:196px;width:22px;height:22px;background:#f6f5f2"><svg width="22" height="21" viewBox="0 0 22 21" style="position:absolute;left:-1px;top:-1px"><path d="M3.500 18l13-14" stroke="#000" stroke-width="1.100"/><circle cx="13.5" cy="7.5" r="1.6" fill="#fff" stroke="#a01828" stroke-width="1"/><circle cx="16.500" cy="11" r="1.500" fill="#fff" stroke="#888" stroke-width=".9"/></svg></div>
<div class="btn" style="left:942px;top:218px;width:22px;height:22px;background:#f6f5f2"><svg width="22" height="21" viewBox="0 0 22 21" style="position:absolute;left:-1px;top:-1px"><path d="M4.500 4l13 13M17.500 4l-13 13" stroke="#6a1010" stroke-width="1.100"/><rect x="9.500" y="9" width="3" height="3" fill="#fff" stroke="#a01828" stroke-width="1"/></svg></div>
<div class="btn" style="left:942px;top:240px;width:22px;height:22px;background:#f6f5f2"><svg width="22" height="21" viewBox="0 0 22 21" style="position:absolute;left:-1px;top:-1px"><rect x="5.500" y="4.500" width="9" height="7" fill="#f0ec50" stroke="#000" stroke-width="1"/><circle cx="14" cy="12" r="3.500" fill="#f0ec50" stroke="#000" stroke-width="1"/><circle cx="5.5" cy="12" r="1.4" fill="#fff" stroke="#a01828" stroke-width="1"/><path d="M10.500 11.500a3.500 3.500 0 0 1 4-3" stroke="#000" fill="none" stroke-width="1"/></svg></div>
<div class="btn" style="left:942px;top:262px;width:22px;height:22px;background:#f6f5f2"><svg width="22" height="21" viewBox="0 0 22 21" style="position:absolute;left:-1px;top:-1px"><path d="M5.500 5l8 8M13.500 5l-8 8" stroke="#8a0a14" stroke-width="2.400"/><circle cx="16.500" cy="15.500" r="1.700" fill="#fff" stroke="#000" stroke-width="1"/></svg></div>
<!--RIGHT-->
<svg id="cv" class="abs" style="left:78px;top:126px" width="825" height="454" viewBox="78 126 825 454">
<rect x="78" y="126" width="825" height="454" fill="#000"/>
<defs>
<linearGradient id="gT1" x1="0" y1="0" x2="1" y2="1"><stop offset="0" stop-color="#ffbf2a"/><stop offset=".45" stop-color="#ffaa00"/><stop offset="1" stop-color="#f39800"/></linearGradient>
<linearGradient id="gT2" x1="0" y1="0" x2="1" y2="1"><stop offset="0" stop-color="#ffb618"/><stop offset=".5" stop-color="#ffaa00"/><stop offset="1" stop-color="#f89e00"/></linearGradient>
<radialGradient id="gS" cx=".35" cy=".35" r=".7"><stop offset="0" stop-color="#6e96ff"/><stop offset="1" stop-color="#3c64d0"/></radialGradient>
<radialGradient id="gH" cx=".4" cy=".35" r=".7"><stop offset="0" stop-color="#ffffff"/><stop offset=".7" stop-color="#f0f0f0"/><stop offset="1" stop-color="#b8b8b8"/></radialGradient>
</defs>
<path d="M307 262 L318 242 L358 218 Q375 212 390 226 Q407 244 412 268 Q414 282 408 287 L395 300 L330 300 L309 282 Z" fill="url(#gT2)"/>
<path d="M307 262 L318 242 L330 236 Q322 262 330 300 L309 282Z" fill="#f29a00"/>
<path d="M251.600 279.600L218.700 271.900L208 279.600L234.200 288.300" stroke="#5282f0" stroke-width="4.200" fill="none" stroke-linejoin="round"/>
<path d="M260.500 215L283.400 203.200M267.800 234.300L293.400 224.200M278.800 254.300L303.400 243.400M289.700 278L308 269M282.400 265.300L311 262M285 208.700L306 224L304.300 245L324.400 254L324.400 270.800M257 203L259.600 221.500L268.800 233L278.800 245L278 258L289.700 270.800M293.400 224.200L304.300 245M303.400 243.400L324.400 254M308 269L322.600 287M283.400 203.200L293.400 224.200" stroke="#416cd6" stroke-width="2.700" fill="none" stroke-linecap="round"/>
<path d="M248.700 200.500L297 301.800M255 196.900L304 293M274.200 185L315.300 287M281.500 185L331.700 263.500L322.600 287" stroke="#4a7aea" stroke-width="3.100" fill="none" stroke-linecap="round" stroke-linejoin="round"/>
<polygon points="195.600,163.800 189.800,174.500 241.500,207.300 243.500,200.800" fill="#3f64cc"/>
<polygon points="265.300,126 280,126 316.200,157.300 318.700,163.800 243.500,200.800 195.600,163.800" fill="#4f80f6"/>
<polygon points="270,126 280,126 316.200,157.300 318.700,163.800 313,160" fill="#4872e0"/>
<polygon points="243.500,200.800 318.700,163.800 317.500,160.500 242,197" fill="#5a8cff"/>
<circle cx="305.500" cy="293.500" r="9.500" fill="url(#gS)"/>
<path d="M297 301.800L290 287M304 293L296 276" stroke="#4a7aea" stroke-width="2.800" stroke-linecap="round"/>
<rect x="316" y="290" width="4" height="5" fill="#d01010"/>
<path d="M313 281q8-3 14 3M318 296l8 3" stroke="#ffff10" stroke-width="4.500" fill="none" stroke-linecap="round"/>
<path d="M336 318L372 338L372 364L350 352Z" fill="#a00808"/>
<path d="M303 306Q306 331 323 341" stroke="#c4c400" stroke-width="10.500" fill="none" stroke-linecap="round"/>
<path d="M303.5 306Q307 330 323 340" stroke="#ffff10" stroke-width="8" fill="none" stroke-linecap="round"/>
<path d="M314 312Q317 336 336 346" stroke="#c4c400" stroke-width="10.500" fill="none" stroke-linecap="round"/>
<path d="M314.5 312Q318 335 336 345" stroke="#ffff10" stroke-width="8" fill="none" stroke-linecap="round"/>
<path d="M325 319Q328 342 348 352" stroke="#c4c400" stroke-width="10.500" fill="none" stroke-linecap="round"/>
<path d="M325.5 319Q329 341 348 351" stroke="#ffff10" stroke-width="8" fill="none" stroke-linecap="round"/>
<path d="M336 325Q339 346 356 356" stroke="#c4c400" stroke-width="10.500" fill="none" stroke-linecap="round"/>
<path d="M336.5 325Q340 345 356 355" stroke="#ffff10" stroke-width="8" fill="none" stroke-linecap="round"/>
<path d="M306.400 330L371 370" stroke="#ffff10" stroke-width="5" stroke-linecap="round"/>
<path d="M300 306L310 330" stroke="#ffff10" stroke-width="4" stroke-linecap="round"/>
<path d="M392 275q9 9 22 30" stroke="#c4c400" stroke-width="8" fill="none" stroke-linecap="round"/>
<path d="M392.5 275q9 9 22 30" stroke="#ffff10" stroke-width="5.500" fill="none" stroke-linecap="round"/>
<path d="M399.5 280q9 9 14.5 28" stroke="#c4c400" stroke-width="8" fill="none" stroke-linecap="round"/>
<path d="M400.0 280q9 9 14.5 28" stroke="#ffff10" stroke-width="5.500" fill="none" stroke-linecap="round"/>
<path d="M406 287q9 9 8 24" stroke="#c4c400" stroke-width="8" fill="none" stroke-linecap="round"/>
<path d="M406.5 287q9 9 8 24" stroke="#ffff10" stroke-width="5.500" fill="none" stroke-linecap="round"/>
<path d="M411 296q9 9 3 17" stroke="#c4c400" stroke-width="8" fill="none" stroke-linecap="round"/>
<path d="M411.5 296q9 9 3 17" stroke="#ffff10" stroke-width="5.500" fill="none" stroke-linecap="round"/>
<path d="M327 283L327 318L372 343L372 300Z" fill="#b40808"/>
<path d="M326.500 284Q325 263 342 259Q362 255 382 270Q395 281 397 293L372 304Z" fill="#a30b0b"/>
<path d="M342 259Q362 255 382 270Q395 281 397 293L390 291Q378 270 340 262Z" fill="#900808"/>
<path d="M371 302L397 291L412 300L416 322L414 340L398 347L380 349L371 342Z" fill="#b00a0a"/>
<path d="M400 296L412 300L416 322L414 340L406 343Z" fill="#9c0808"/>
<path d="M333 280.5q-5 0-5 5V317" stroke="#ffff10" stroke-width="3.400" fill="none" stroke-linecap="round"/>
<path d="M346.7 286.5q-5 0-5 5V324" stroke="#ffff10" stroke-width="3.400" fill="none" stroke-linecap="round"/>
<path d="M360.4 294.5q-5 0-5 5V332" stroke="#ffff10" stroke-width="3.400" fill="none" stroke-linecap="round"/>
<path d="M368.500 341V309L386 293L396 293" stroke="#ffff10" stroke-width="3.400" fill="none" stroke-linecap="round" stroke-linejoin="round"/>
<path d="M314 309.500L366 339" stroke="#a8a078" stroke-width="2.600"/>
<path d="M199.500 326Q201 308 213.500 300L256 279Q272 274 284 288Q300 306 305.500 332Q307 346 300 354L252 381Q238 386 226 378Q204 358 199.500 326Z" fill="url(#gT1)"/>
<ellipse cx="228" cy="341" rx="27" ry="42" transform="rotate(-18 228 341)" fill="#ffac04"/>
<ellipse cx="230.500" cy="344" rx="13.500" ry="21.500" transform="rotate(-20 230.500 344)" fill="#ffc21c" stroke="#c88400" stroke-width=".7"/>
<path d="M233 325q10 12 5 36" stroke="#ffaa04" stroke-width="7" fill="none"/>
<circle cx="240.500" cy="339" r="1" fill="#fff0b0"/>
<linearGradient id="gB" gradientUnits="userSpaceOnUse" x1="540" y1="440" x2="520" y2="476"><stop offset="0" stop-color="#9c009c"/><stop offset="1" stop-color="#7e007e"/></linearGradient>
<path d="M371.400 388.700L372.500 338.500L405.600 323.700L755.200 550.200L755.500 556.500L736.400 567.600L727.800 564.700L540 475L500 455.500Z" fill="url(#gB)"/>
<polygon points="372.500,338.500 381,334.500 398,346 412,340 404,327 405.600,323.700 755.200,550.200 733.600,557.500" fill="#a400a4"/><polygon points="381,334.500 398,346 412,340 404,327 396,329" fill="#6e006e"/>
<polygon points="733.600,557.500 755.200,550.200 755.500,556.500 736.400,567.600" fill="#940094"/>
<path d="M404 322L419 332" stroke="#8c1aa0" stroke-width="6.500"/>
<path d="M400 315q-12-7-18 4q-3 10 8 15" stroke="#ffff10" stroke-width="5.200" fill="none" stroke-linecap="round"/>
<path d="M387 319l17 8l-4 12l-17-8z" fill="#a00808"/><ellipse cx="385.500" cy="325" rx="3.800" ry="6" fill="#c01414" transform="rotate(-20 385.500 325)"/>
<path d="M403 313l3 6 3-6zM378 337l9-4" stroke="#c09080" stroke-width="1.300" fill="#c09080"/>
<path d="M392 344l4-3M399 347l5-4" stroke="#ffff10" stroke-width="3" stroke-linecap="round"/>
<path d="M410 358.600Q408 340 420 333Q432 326 444.500 338" stroke="#ffff10" stroke-width="5.400" fill="none" stroke-linecap="round"/>
<path d="M410 358.600Q408 340 420 333" stroke="#e0e000" stroke-width="1.500" fill="none"/>
<path d="M423 364q2-6 10-5l20-2q3 6 0 10q-14 8-30-3z" fill="#f2f2f2"/>
<ellipse cx="438.600" cy="350.600" rx="13.600" ry="11.800" fill="url(#gH)"/>
<circle cx="441.300" cy="355.400" r="1.500" fill="#a01010"/><circle cx="450.500" cy="350.600" r="1.500" fill="#a01010"/><path d="M441 362q6 0 9-4" stroke="#a03030" stroke-width=".9" fill="none"/>
<path d="M434 371.400Q433 350 442 343Q450 337 456 346Q461 354 460.400 364" stroke="#ffff10" stroke-width="5.400" fill="none" stroke-linecap="round"/>
<path d="M434 371.400Q446 376 460.400 364" stroke="#ffff10" stroke-width="5" fill="none" stroke-linecap="round"/>
<ellipse cx="513.500" cy="405.500" rx="15.500" ry="9.500" fill="#4a7cf0" transform="rotate(-8 513.500 405.500)"/>
<path d="M503 402l17 6M507 398l-6 6M524 403l-7 8" stroke="#ffff10" stroke-width="2.200" fill="none"/>
<path d="M606 476.500L635.400 482.400L625.300 462" stroke="#ffff10" stroke-width="3.200" fill="none"/>
<path d="M629.600 489L651.300 494L645.500 479.500" stroke="#ffff10" stroke-width="3.200" fill="none"/>
<radialGradient id="gW" cx=".6" cy=".4" r=".75"><stop offset="0" stop-color="#5a8cf8"/><stop offset="1" stop-color="#3f6cdc"/></radialGradient>
<ellipse cx="728.7" cy="494.5" rx="20" ry="27.800" transform="rotate(-16 728.7 494.5)" fill="url(#gW)"/><ellipse cx="724.9000000000001" cy="495.0" rx="13" ry="20.500" transform="rotate(-16 724.9000000000001 495.0)" fill="#3c66d0"/><ellipse cx="724.4000000000001" cy="495.5" rx="10.500" ry="17.500" transform="rotate(-16 724.4000000000001 495.5)" fill="#4672dc" stroke="#9ab4f4" stroke-width=".9" stroke-dasharray="1.300 2.200"/>
<path d="M722 486l4 4 -1 8 -3 4" stroke="#6a96fa" stroke-width="2.600" fill="none"/>
<path d="M700.900 513.300L719.500 502" stroke="#5686f4" stroke-width="4.200" stroke-linecap="round"/>
<path d="M709.700 518.600L733.400 506" stroke="#ffff10" stroke-width="2.400"/>
<polygon points="726.500,530 766,508.300 788.700,525 750.200,543.900" fill="#4c7cf0"/>
<polygon points="766,502.400 789.700,516.200 789.700,526 766,508.300" fill="#4470dc"/>
<polygon points="766,502.400 769,504.100 769,510.500 766,508.300" fill="#5a8cff"/>
<polygon points="659.400,564.600 702.800,543.900 725.500,556.700 689,581" fill="#4c7cf0"/>
<polygon points="659.400,564.600 689,579 689,592 659.400,575.500" fill="#3c64cc"/>
<path d="M662.300 535L674.200 530" stroke="#5686f4" stroke-width="4.200" stroke-linecap="round"/>
<path d="M664.300 545.900L681 536" stroke="#ffff10" stroke-width="2.400"/>
<ellipse cx="642.6" cy="540" rx="20" ry="27.800" transform="rotate(-16 642.6 540)" fill="url(#gW)"/><ellipse cx="639.4" cy="540.5" rx="13" ry="20.500" transform="rotate(-16 639.4 540.5)" fill="#3c66d0"/><ellipse cx="638.9" cy="541" rx="10.500" ry="17.500" transform="rotate(-16 638.9 541)" fill="#4672dc" stroke="#9ab4f4" stroke-width=".9" stroke-dasharray="1.300 2.200"/>
<path d="M123.500 535.500V498M123.500 535.500L155 517M123.500 535.500L155 553.500" stroke="#9a7a3a" stroke-width="1" fill="none"/><path d="M122 510l1.500-6 1.500 6zM143 522l6-2-4 4zM143 548.500l6 2-4-4z" fill="#c09848"/><circle cx="123.500" cy="535.500" r="1.500" fill="none" stroke="#b08a40" stroke-width=".8"/>
</svg>
<div class="ef" style="left:77px;top:588px;width:348px;height:34px"></div>
<div class="ef" style="left:426px;top:588px;width:168px;height:34px"></div>
<div class="ef" style="left:596px;top:588px;width:164px;height:34px"></div>
<div class="abs" style="left:80px;top:593px;width:17px;height:15px;background:#ebe8dc"><span class="abs n" style="left:4px;top:0px;font-size:12px">X</span></div>
<div class="inp" style="left:98px;top:594px;width:73px;height:21px"><span class="abs n" style="left:3px;top:3px;font-size:12px">0</span></div>
<div class="abs" style="left:178px;top:593px;width:17px;height:24px;background:#ebe8dc"><span class="abs n" style="left:3px;top:0px;font-size:12px">Y</span></div>
<div class="inp" style="left:198px;top:594px;width:74px;height:21px"><span class="abs n" style="left:3px;top:3px;font-size:12px">0</span></div>
<div class="abs" style="left:276px;top:593px;width:16px;height:24px;background:#ebe8dc"><span class="abs n" style="left:2px;top:0px;font-size:12px">Z</span></div>
<div class="inp" style="left:294px;top:594px;width:73px;height:21px"><span class="abs n" style="left:3px;top:3px;font-size:12px">0</span></div>
<div class="btn" style="left:372px;top:593px;width:49px;height:21px;background:#ece9d8;text-align:center;line-height:19px;font-size:12px"><span class="nc">OK</span></div>
<div class="abs" style="left:432px;top:598px;width:27px;height:20px;background:#ebe8dc"><span class="abs n" style="left:3px;top:2px;font-size:12px">Dist</span></div>
<div class="inp" style="left:458px;top:596px;width:82px;height:20px"><span class="abs n" style="left:3px;top:3px;font-size:12px">1</span></div>
<div class="btn" style="left:543px;top:595px;width:46px;height:21px;background:#ece9d8;text-align:center;line-height:19px;font-size:12px"><span class="nc">OK</span></div>
<div class="abs" style="left:600px;top:594px;width:35px;height:24px;background:#ebe8dc"><span class="abs n" style="left:3px;top:1px;font-size:12px">Angle</span></div>
<div class="inp" style="left:634px;top:595px;width:72px;height:21px"><span class="abs n" style="left:3px;top:3px;font-size:12px">0</span></div>
<div class="btn" style="left:710px;top:593px;width:45px;height:21px;background:#ece9d8;text-align:center;line-height:19px;font-size:12px"><span class="nc">OK</span></div>
<div id="status" class="abs"><span class="abs" style="left:68px;top:0px;font-size:12px;transform:scaleX(.895);transform-origin:0 50%;white-space:nowrap">-1.692 , 6.920 , 8.612</span><div class="abs" style="left:238px;top:0;width:1px;height:23px;background:#c8c8c8"></div><span class="abs" style="left:241px;top:1px;font-size:13.500px;letter-spacing:-0.3px">Open file ...</span></div>
<div class="abs" style="left:0;top:655px;width:977px;height:3px;background:#16204a"></div>
<div class="abs" style="left:1px;top:656px;width:2px;height:2px;background:#e8e8f0"></div>
<div class="abs" style="left:5px;top:656px;width:2px;height:2px;background:#e8e8f0"></div>
<div class="abs" style="left:9px;top:656px;width:2px;height:2px;background:#e8e8f0"></div>
<div class="abs" style="left:13px;top:656px;width:2px;height:2px;background:#e8e8f0"></div>
<div class="abs" style="left:17px;top:656px;width:2px;height:2px;background:#e8e8f0"></div>
<div class="abs" style="left:21px;top:656px;width:2px;height:2px;background:#e8e8f0"></div>
<div class="abs" style="left:150px;top:656px;width:2px;height:2px;background:#e8e8f0"></div>
<div class="abs" style="left:154px;top:656px;width:2px;height:2px;background:#e8e8f0"></div>
<div class="abs" style="left:158px;top:656px;width:2px;height:2px;background:#e8e8f0"></div>
<div class="abs" style="left:162px;top:656px;width:2px;height:2px;background:#e8e8f0"></div>
<div class="abs" style="left:166px;top:656px;width:2px;height:2px;background:#e8e8f0"></div>
<div class="abs" style="left:170px;top:656px;width:2px;height:2px;background:#e8e8f0"></div>
<div class="abs" style="left:174px;top:656px;width:2px;height:2px;background:#e8e8f0"></div>
<div class="abs" style="left:230px;top:656px;width:2px;height:2px;background:#e8e8f0"></div>
<div class="abs" style="left:234px;top:656px;width:2px;height:2px;background:#e8e8f0"></div>
<div class="abs" style="left:238px;top:656px;width:2px;height:2px;background:#e8e8f0"></div>
<div class="abs" style="left:242px;top:656px;width:2px;height:2px;background:#e8e8f0"></div>
<div class="abs" style="left:246px;top:656px;width:2px;height:2px;background:#e8e8f0"></div>
<div class="abs" style="left:250px;top:656px;width:2px;height:2px;background:#e8e8f0"></div>
<div class="abs" style="left:372px;top:656px;width:2px;height:2px;background:#e8e8f0"></div>
<div class="abs" style="left:376px;top:656px;width:2px;height:2px;background:#e8e8f0"></div>
<div class="abs" style="left:380px;top:656px;width:2px;height:2px;background:#e8e8f0"></div>
<div class="abs" style="left:384px;top:656px;width:2px;height:2px;background:#e8e8f0"></div>
<div class="abs" style="left:388px;top:656px;width:2px;height:2px;background:#e8e8f0"></div>
<div class="abs" style="left:392px;top:656px;width:2px;height:2px;background:#e8e8f0"></div>
<div class="abs" style="left:396px;top:656px;width:2px;height:2px;background:#e8e8f0"></div>
<div class="abs" style="left:400px;top:656px;width:2px;height:2px;background:#e8e8f0"></div>
<div class="abs" style="left:404px;top:656px;width:2px;height:2px;background:#e8e8f0"></div>
<div class="abs" style="left:408px;top:656px;width:2px;height:2px;background:#e8e8f0"></div>
<div class="abs" style="left:412px;top:656px;width:2px;height:2px;background:#e8e8f0"></div>
</div></body></html>
